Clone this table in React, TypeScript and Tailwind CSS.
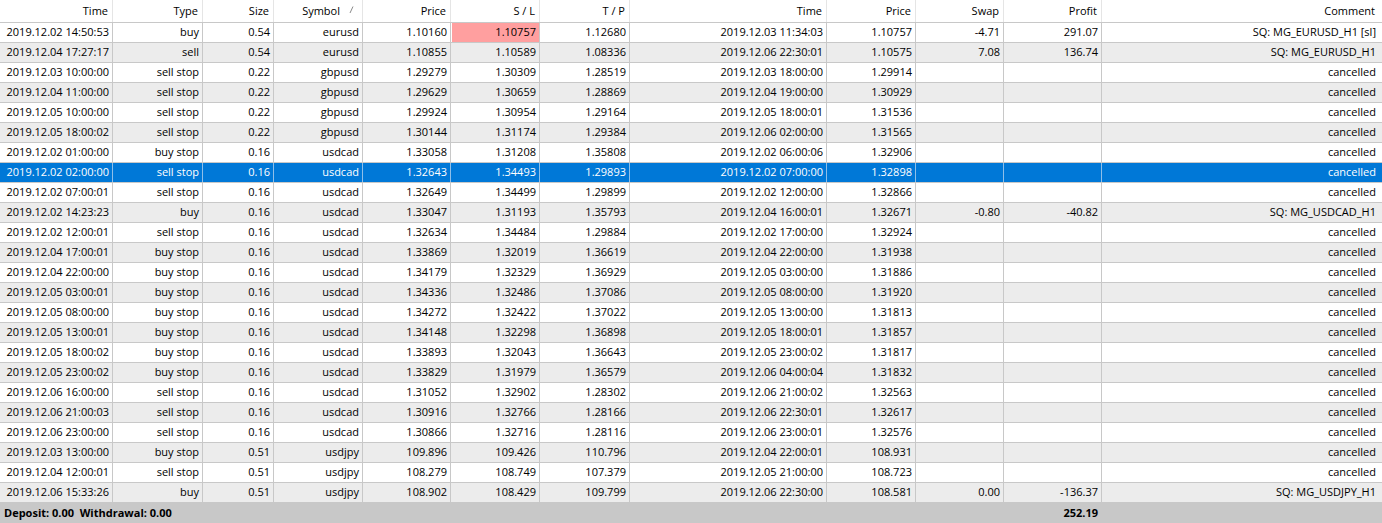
import React from "react";

type Row = string[];

const cols =
  "grid grid-cols-[113px_90px_71px_89px_88px_89px_90px_197px_89px_88px_98px_280px]";

const headers = [
  "Time",
  "Type",
  "Size",
  "Symbol",
  "Price",
  "S / L",
  "T / P",
  "Time",
  "Price",
  "Swap",
  "Profit",
  "Comment",
];

const rows: Row[] = [
  ["2019.12.02 14:50:53", "buy", "0.54", "eurusd", "1.10160", "1.10757", "1.12680", "2019.12.03 11:34:03", "1.10757", "-4.71", "291.07", "SQ: MG_EURUSD_H1 [sl]"],
  ["2019.12.04 17:27:17", "sell", "0.54", "eurusd", "1.10855", "1.10589", "1.08336", "2019.12.06 22:30:01", "1.10575", "7.08", "136.74", "SQ: MG_EURUSD_H1"],
  ["2019.12.03 10:00:00", "sell stop", "0.22", "gbpusd", "1.29279", "1.30309", "1.28519", "2019.12.03 18:00:00", "1.29914", "", "", "cancelled"],
  ["2019.12.04 11:00:00", "sell stop", "0.22", "gbpusd", "1.29629", "1.30659", "1.28869", "2019.12.04 19:00:00", "1.30929", "", "", "cancelled"],
  ["2019.12.05 10:00:00", "sell stop", "0.22", "gbpusd", "1.29924", "1.30954", "1.29164", "2019.12.05 18:00:01", "1.31536", "", "", "cancelled"],
  ["2019.12.05 18:00:02", "sell stop", "0.22", "gbpusd", "1.30144", "1.31174", "1.29384", "2019.12.06 02:00:00", "1.31565", "", "", "cancelled"],
  ["2019.12.02 01:00:00", "buy stop", "0.16", "usdcad", "1.33058", "1.31208", "1.35808", "2019.12.02 06:00:06", "1.32906", "", "", "cancelled"],
  ["2019.12.02 02:00:00", "sell stop", "0.16", "usdcad", "1.32643", "1.34493", "1.29893", "2019.12.02 07:00:00", "1.32898", "", "", "cancelled"],
  ["2019.12.02 07:00:01", "sell stop", "0.16", "usdcad", "1.32649", "1.34499", "1.29899", "2019.12.02 12:00:00", "1.32866", "", "", "cancelled"],
  ["2019.12.02 14:23:23", "buy", "0.16", "usdcad", "1.33047", "1.31193", "1.35793", "2019.12.04 16:00:01", "1.32671", "-0.80", "-40.82", "SQ: MG_USDCAD_H1"],
  ["2019.12.02 12:00:01", "sell stop", "0.16", "usdcad", "1.32634", "1.34484", "1.29884", "2019.12.02 17:00:00", "1.32924", "", "", "cancelled"],
  ["2019.12.04 17:00:01", "buy stop", "0.16", "usdcad", "1.33869", "1.32019", "1.36619", "2019.12.04 22:00:00", "1.31938", "", "", "cancelled"],
  ["2019.12.04 22:00:00", "buy stop", "0.16", "usdcad", "1.34179", "1.32329", "1.36929", "2019.12.05 03:00:00", "1.31886", "", "", "cancelled"],
  ["2019.12.05 03:00:01", "buy stop", "0.16", "usdcad", "1.34336", "1.32486", "1.37086", "2019.12.05 08:00:00", "1.31920", "", "", "cancelled"],
  ["2019.12.05 08:00:00", "buy stop", "0.16", "usdcad", "1.34272", "1.32422", "1.37022", "2019.12.05 13:00:00", "1.31813", "", "", "cancelled"],
  ["2019.12.05 13:00:01", "buy stop", "0.16", "usdcad", "1.34148", "1.32298", "1.36898", "2019.12.05 18:00:01", "1.31857", "", "", "cancelled"],
  ["2019.12.05 18:00:02", "buy stop", "0.16", "usdcad", "1.33893", "1.32043", "1.36643", "2019.12.05 23:00:02", "1.31817", "", "", "cancelled"],
  ["2019.12.05 23:00:02", "buy stop", "0.16", "usdcad", "1.33829", "1.31979", "1.36579", "2019.12.06 04:00:04", "1.31832", "", "", "cancelled"],
  ["2019.12.06 16:00:00", "sell stop", "0.16", "usdcad", "1.31052", "1.32902", "1.28302", "2019.12.06 21:00:02", "1.32563", "", "", "cancelled"],
  ["2019.12.06 21:00:03", "sell stop", "0.16", "usdcad", "1.30916", "1.32766", "1.28166", "2019.12.06 22:30:01", "1.32617", "", "", "cancelled"],
  ["2019.12.06 23:00:00", "sell stop", "0.16", "usdcad", "1.30866", "1.32716", "1.28116", "2019.12.06 23:00:01", "1.32576", "", "", "cancelled"],
  ["2019.12.03 13:00:00", "buy stop", "0.51", "usdjpy", "109.896", "109.426", "110.796", "2019.12.04 22:00:01", "108.931", "", "", "cancelled"],
  ["2019.12.04 12:00:01", "sell stop", "0.51", "usdjpy", "108.279", "108.749", "107.379", "2019.12.05 21:00:00", "108.723", "", "", "cancelled"],
  ["2019.12.06 15:33:26", "buy", "0.51", "usdjpy", "108.902", "108.429", "109.799", "2019.12.06 22:30:00", "108.581", "0.00", "-136.37", "SQ: MG_USDJPY_H1"],
];

const SELECTED = 7;

function SortMark() {
  return (
    <svg width="5" height="8" viewBox="0 0 5 8" className="ml-[9px] mr-[8px] mb-[2px]">
      <line x1="4" y1="0.5" x2="1" y2="7" stroke="#8a8a8a" strokeWidth="1" />
    </svg>
  );
}

export default function App() {
  return (
    <div
      className="w-[1382px] h-[523px] overflow-hidden bg-white text-[11px] text-black"
      style={{ fontFamily: '"Segoe UI", "Open Sans", "Noto Sans", sans-serif' }}
    >
      {/* column headers */}
      <div className={`${cols} h-[23px] border-b border-[#c8c8c8]`}>
        {headers.map((h, i) => (
          <div
            key={i}
            className={`flex items-center justify-end whitespace-nowrap ${
              i < 11 ? "border-r border-[#e5e5e5]" : ""
            } ${i === 11 ? "pr-[7px]" : i === 3 ? "" : "pr-[4px]"}`}
          >
            {h}
            {i === 3 && <SortMark />}
          </div>
        ))}
      </div>

      {rows.map((r, ri) => {
        const sel = ri === SELECTED;
        const bg = sel ? "bg-[#0078d7] text-white" : ri % 2 === 1 ? "bg-[#ececec]" : "bg-white";
        return (
          <div key={ri} className={`${cols} h-[20px] border-b border-[#c8c8c8] ${bg}`}>
            {r.map((c, ci) => {
              const pink = ri === 0 && ci === 5;
              return (
                <div
                  key={ci}
                  className={`flex items-center justify-end whitespace-nowrap overflow-hidden ${
                    ci < 11 ? (sel ? "border-r border-[#8fbfe9]" : "border-r border-[#c8c8c8]") : ""
                  } ${ci === 11 ? "pr-[6px]" : "pr-[3px]"} ${
                    pink ? "bg-[#ff9f9f] border-l border-l-white" : ""
                  }`}
                >
                  {c}
                </div>
              );
            })}
          </div>
        );
      })}

      {/* totals */}
      <div className={`${cols} h-[20px] bg-[#c8c8c8] font-bold`}>
        <div className="col-span-10 flex items-center pl-[4px] whitespace-pre">
          Deposit: 0.00  Withdrawal: 0.00
        </div>
        <div className="flex items-center justify-end pr-[4px]">252.19</div>
        <div />
      </div>
    </div>
  );
}
